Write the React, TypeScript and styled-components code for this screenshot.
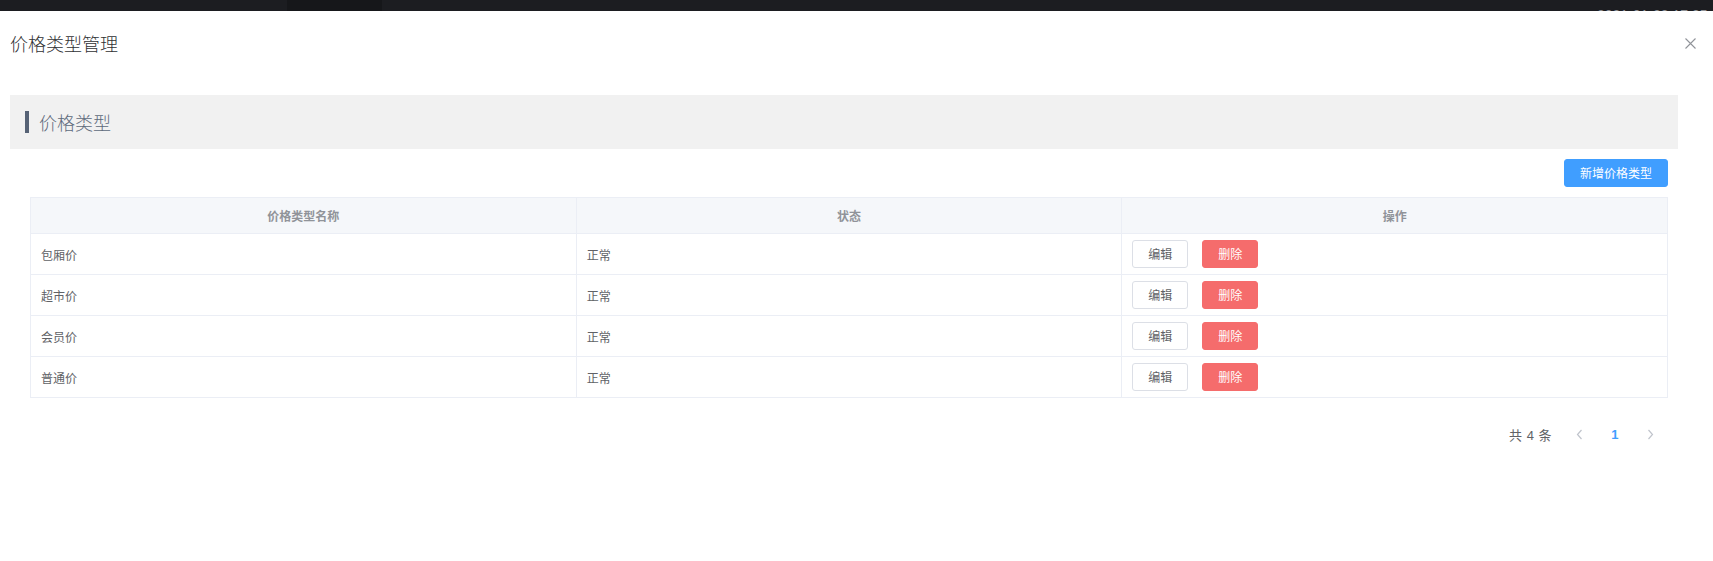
import React from "react";
import styled, { createGlobalStyle } from "styled-components";

const GlobalStyle = createGlobalStyle`
  html, body { margin: 0; padding: 0; background: #ffffff; }
  body {
    font-family: "Liberation Sans", "Noto Sans CJK SC", sans-serif;
    color: #606266;
    -webkit-font-smoothing: antialiased;
  }
  * { box-sizing: border-box; }
`;

const Page = styled.div`
  width: 1713px;
  height: 561px;
  display: flex;
  flex-direction: column;
  background: #ffffff;
  overflow: hidden;
`;

const TopBar = styled.div`
  height: 11px;
  flex: none;
  display: flex;
  background: #1c1d21;
  overflow: hidden;
`;

const BarSegment = styled.div<{ $w?: number; $dark?: boolean }>`
  flex: ${(p) => (p.$w ? `0 0 ${p.$w}px` : "1 1 auto")};
  background: ${(p) => (p.$dark ? "#16171a" : "#1c1d21")};
`;

const BarClock = styled.div`
  flex: none;
  padding: 8px 0 0 0;
  width: 116px;
  font-size: 14px;
  line-height: 14px;
  color: #8f9196;
  white-space: nowrap;
`;

const Dialog = styled.div`
  flex: 1;
  background: #ffffff;
  display: flex;
  flex-direction: column;
`;

const DialogHeader = styled.div`
  display: flex;
  align-items: center;
  justify-content: space-between;
  padding: 20px 17px 10px 10px;
`;

const DialogTitle = styled.span`
  font-family: "Noto Sans CJK SC", sans-serif;
  font-size: 18px;
  font-weight: 300;
  line-height: 24px;
  color: #303133;
`;

const CloseButton = styled.button`
  border: 0;
  background: transparent;
  padding: 0;
  width: 12px;
  height: 12px;
  display: flex;
  align-items: center;
  justify-content: center;
  cursor: pointer;
`;

const DialogBody = styled.div`
  padding: 30px 35px 0 10px;
`;

const SectionHeader = styled.div`
  height: 54px;
  background: #f1f1f1;
  display: flex;
  align-items: center;
  padding-left: 15px;
`;

const SectionMark = styled.span`
  width: 4px;
  height: 22px;
  background: #566275;
  margin-right: 10px;
`;

const SectionTitle = styled.span`
  font-family: "Noto Sans CJK SC", sans-serif;
  font-size: 18px;
  font-weight: 300;
  color: #5d6a7b;
`;

const Content = styled.div`
  padding: 0 10px 0 20px;
`;

const Toolbar = styled.div`
  display: flex;
  justify-content: flex-end;
  margin: 10px 0;
`;

const Button = styled.button<{ $variant?: "primary" | "danger" | "default" }>`
  height: 28px;
  padding: 0 15px;
  border-radius: 3px;
  font-family: "Noto Sans CJK SC", sans-serif;
  font-size: 12px;
  line-height: 1;
  cursor: pointer;
  white-space: nowrap;
  border: 1px solid
    ${(p) =>
      p.$variant === "primary"
        ? "#409eff"
        : p.$variant === "danger"
        ? "#f56c6c"
        : "#dcdfe6"};
  background: ${(p) =>
    p.$variant === "primary"
      ? "#409eff"
      : p.$variant === "danger"
      ? "#f56c6c"
      : "#ffffff"};
  color: ${(p) => (p.$variant === "default" || !p.$variant ? "#606266" : "#ffffff")};
`;

const Table = styled.table`
  width: 100%;
  table-layout: fixed;
  border-collapse: collapse;
  border: 1px solid #ebeef5;
`;

const Th = styled.th`
  height: 36px;
  padding: 0 10px;
  background: #f5f7fa;
  border: 1px solid #ebeef5;
  font-family: "Noto Sans CJK SC", sans-serif;
  font-size: 12px;
  font-weight: 700;
  color: #909399;
  text-align: center;
`;

const Td = styled.td`
  height: 41px;
  padding: 0 10px;
  border: 1px solid #ebeef5;
  font-family: "Noto Sans CJK SC", sans-serif;
  font-size: 12px;
  color: #606266;
  text-align: left;
`;

const Actions = styled.div`
  display: flex;
  align-items: center;
  gap: 14px;
`;

const Pagination = styled.div`
  display: flex;
  justify-content: flex-end;
  align-items: center;
  margin-top: 22px;
  height: 28px;
`;

const Total = styled.span`
  font-family: "Liberation Sans", "Noto Sans CJK SC", sans-serif;
  font-size: 13px;
  color: #606266;
  margin-right: 10px;
  word-spacing: 1px;
`;

const PageBtn = styled.button<{ $active?: boolean }>`
  width: 35.5px;
  height: 28px;
  border: 0;
  background: transparent;
  padding: 0;
  display: flex;
  align-items: center;
  justify-content: center;
  font-family: "Liberation Sans", sans-serif;
  font-size: 13px;
  font-weight: 700;
  color: ${(p) => (p.$active ? "#409eff" : "#c0c4cc")};
`;

const Chevron = ({ dir }: { dir: "left" | "right" }) => (
  <svg width="7" height="11" viewBox="0 0 7 11" fill="none">
    <path
      d={dir === "left" ? "M5.5 1 L1.5 5.5 L5.5 10" : "M1.5 1 L5.5 5.5 L1.5 10"}
      stroke="#c0c4cc"
      strokeWidth="1.2"
    />
  </svg>
);

const rows = [
  { name: "包厢价", status: "正常" },
  { name: "超市价", status: "正常" },
  { name: "会员价", status: "正常" },
  { name: "普通价", status: "正常" },
];

export default function App() {
  return (
    <>
      <GlobalStyle />
      <Page>
        <TopBar>
          <BarSegment $w={287} />
          <BarSegment $w={95} $dark />
          <BarSegment />
          <BarClock>2021-01-28 17:35</BarClock>
        </TopBar>
        <Dialog>
          <DialogHeader>
            <DialogTitle>价格类型管理</DialogTitle>
            <CloseButton aria-label="关闭">
              <svg width="11" height="11" viewBox="0 0 11 11">
                <path d="M0.5 0.5 L10.5 10.5 M10.5 0.5 L0.5 10.5" stroke="#909399" strokeWidth="1.1" />
              </svg>
            </CloseButton>
          </DialogHeader>
          <DialogBody>
            <SectionHeader>
              <SectionMark />
              <SectionTitle>价格类型</SectionTitle>
            </SectionHeader>
            <Content>
              <Toolbar>
                <Button $variant="primary">新增价格类型</Button>
              </Toolbar>
              <Table>
                <thead>
                  <tr>
                    <Th>价格类型名称</Th>
                    <Th>状态</Th>
                    <Th>操作</Th>
                  </tr>
                </thead>
                <tbody>
                  {rows.map((r) => (
                    <tr key={r.name}>
                      <Td>{r.name}</Td>
                      <Td>{r.status}</Td>
                      <Td>
                        <Actions>
                          <Button $variant="default">编辑</Button>
                          <Button $variant="danger">删除</Button>
                        </Actions>
                      </Td>
                    </tr>
                  ))}
                </tbody>
              </Table>
              <Pagination>
                <Total>共 4 条</Total>
                <PageBtn aria-label="上一页">
                  <Chevron dir="left" />
                </PageBtn>
                <PageBtn $active>1</PageBtn>
                <PageBtn aria-label="下一页">
                  <Chevron dir="right" />
                </PageBtn>
              </Pagination>
            </Content>
          </DialogBody>
        </Dialog>
      </Page>
    </>
  );
}
